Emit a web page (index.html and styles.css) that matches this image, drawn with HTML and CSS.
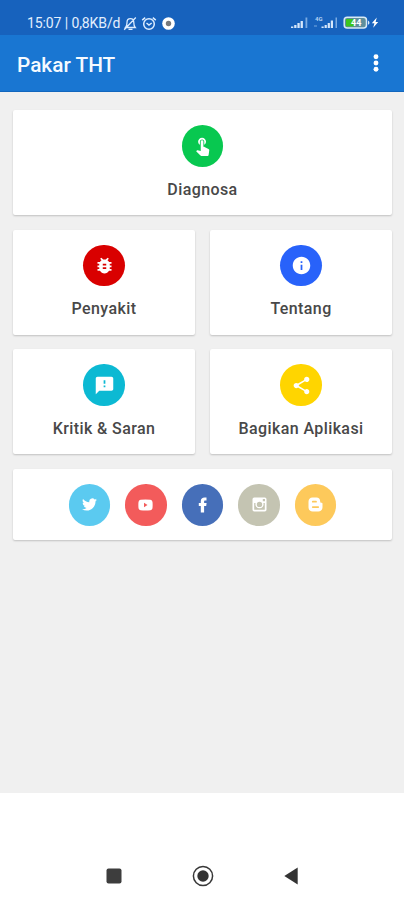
FILE: index.html
```html
<!DOCTYPE html>
<html lang="id">
<head>
<meta charset="utf-8">
<title>Pakar THT</title>
<link rel="stylesheet" href="styles.css">
</head>
<body>
<div class="status">
  <div class="status-left">
    <span class="clock">15:07 | 0,8KB/d</span>
    <svg class="mute" width="14" height="15" viewBox="0 0 14 15" fill="none" stroke="#dcecff" stroke-width="1.3"><path d="M2.5 11.5h9.7c-1.2-1.3-1.4-2.3-1.4-5C10.800 4 9.500 2.700 7.400 2.700S4 4 4 6.500c0 2.700-.3 3.700-1.500 5zM5.500 13.300h4M12.800 1.500L1.200 13.800"/></svg>
    <svg class="alarm" width="16" height="15" viewBox="0 0 16 15" fill="none" stroke="#dcecff" stroke-width="1.500"><circle cx="8" cy="8" r="5.300"/><path d="M1.200 4.200l3-2.500M14.800 4.200l-3-2.500M5.500 7l2.500 2 2.700-2"/></svg>
    <svg class="record" width="13" height="13" viewBox="0 0 13 13"><circle cx="6.500" cy="6.500" r="6.300" fill="#fff"/><circle cx="6.500" cy="6.500" r="2.700" fill="#77797c"/></svg>
  </div>
  <div class="status-right">
    <svg width="90" height="16" viewBox="0 0 90 16">
      <g fill="#d6e7fb"><path d="M1 11.500h2.300V13H1zM4.200 10h2.300v3H4.200zM7.400 8h2.300v5H7.400zM10.600 6h2.300v7h-2.300z"/><path d="M31.500 11.500h2.200V13h-2.200zM34.600 10h2.200v3h-2.200zM37.700 8h2.200v5h-2.200zM40.800 5.500H43V13h-2.200z"/></g>
      <path fill="#79aae2" d="M15.500 2.500h1.800V13h-1.800zM45.500 2.500h1.500V13h-1.500zM24 10.500h3v1h-3z"/>
      <text class="network" x="25" y="6">4G</text>
      <rect x="54.200" y="2.200" width="22.300" height="10.800" rx="3" fill="#5f8f9c" stroke="#d8eaf6" stroke-width="1.500"/>
      <path fill="#3cc51e" d="M56 4h8v7.400h-8z"/><path fill="#d8eaf6" d="M78 5.500c2 .8 2 3.500 0 4.300z"/>
      <text class="charge" x="61" y="11">44</text>
      <path fill="#fff" d="M86.800 2.500l-5 5.700h2.600l-1.200 4.500 5-5.800h-2.600z"/>
    </svg>
  </div>
</div>
<header class="appbar">
  <h1>Pakar THT</h1>
  <svg width="6" height="18" viewBox="0 0 6 18" fill="#fff"><circle cx="3" cy="2.700" r="2.450"/><circle cx="3" cy="9" r="2.450"/><circle cx="3" cy="15.300" r="2.450"/></svg>
</header>
<main class="content">
  <section class="card wide">
    <span class="circle green"><svg width="21" height="21" viewBox="0 0 24 24"><path d="M9 11.240V7.500C9 6.120 10.120 5 11.500 5S14 6.120 14 7.500v3.740c1.210-.81 2-2.180 2-3.740C16 5.010 13.990 3 11.500 3S7 5.010 7 7.500c0 1.560.79 2.930 2 3.740zm9.840 4.630l-4.540-2.260c-.17-.07-.35-.11-.54-.11H13v-6c0-.83-.67-1.500-1.500-1.500S10 6.670 10 7.500v10.740l-3.430-.72c-.08-.01-.15-.03-.24-.03-.31 0-.59.13-.79.33l-.79.8 4.940 4.940c.27.270.65.440 1.060.440h6.790c.75 0 1.330-.55 1.440-1.280l.75-5.270c.01-.07.020-.14.020-.2 0-.62-.38-1.160-.91-1.380z"/></svg></span>
    <span class="label">Diagnosa</span>
  </section>
  <section class="card">
    <span class="circle red"><svg width="21" height="21" viewBox="0 0 24 24"><path d="M20 8h-2.810c-.45-.78-1.070-1.450-1.820-1.960L17 4.410 15.590 3l-2.170 2.170C12.960 5.060 12.490 5 12 5s-.96.060-1.410.17L8.410 3 7 4.410l1.620 1.630C7.880 6.550 7.260 7.220 6.810 8H4v2h2.090c-.05.33-.09.66-.09 1v1H4v2h2v1c0 .34.040.67.090 1H4v2h2.810c1.040 1.790 2.970 3 5.190 3s4.150-1.210 5.190-3H20v-2h-2.090c.05-.33.090-.66.090-1v-1h2v-2h-2v-1c0-.34-.04-.67-.09-1H20V8zm-6 8h-4v-2h4v2zm0-4h-4v-2h4v2z"/></svg></span>
    <span class="label">Penyakit</span>
  </section>
  <section class="card">
    <span class="circle blue"><svg width="21" height="21" viewBox="0 0 24 24"><path d="M12 2C6.480 2 2 6.480 2 12s4.480 10 10 10 10-4.480 10-10S17.520 2 12 2zm1 15h-2v-6h2v6zm0-8h-2V7h2v2z"/></svg></span>
    <span class="label">Tentang</span>
  </section>
  <section class="card">
    <span class="circle cyan"><svg width="21" height="21" viewBox="0 0 24 24"><path d="M20 2H4c-1.100 0-1.990.9-1.990 2L2 22l4-4h14c1.100 0 2-.9 2-2V4c0-1.100-.9-2-2-2zm-7 12h-2v-2h2v2zm0-4h-2V6h2v4z"/></svg></span>
    <span class="label">Kritik &amp; Saran</span>
  </section>
  <section class="card">
    <span class="circle yellow"><svg width="21" height="21" viewBox="0 0 24 24"><path d="M18 16.080c-.76 0-1.440.3-1.960.77L8.910 12.700c.05-.23.090-.46.090-.7s-.04-.47-.09-.7l7.050-4.110c.54.5 1.250.81 2.040.81 1.660 0 3-1.340 3-3s-1.340-3-3-3-3 1.340-3 3c0 .24.040.47.090.7L8.040 9.810C7.500 9.310 6.790 9 6 9c-1.660 0-3 1.340-3 3s1.340 3 3 3c.79 0 1.500-.31 2.040-.81l7.120 4.160c-.05.21-.08.430-.08.650 0 1.610 1.310 2.920 2.920 2.920s2.920-1.310 2.920-2.920-1.310-2.920-2.920-2.920z"/></svg></span>
    <span class="label">Bagikan Aplikasi</span>
  </section>
  <section class="card wide social">
    <span class="circle twitter"><svg width="15" height="15" viewBox="0 0 24 24"><path d="M23.950 4.570a10 10 0 0 1-2.820.77 4.960 4.960 0 0 0 2.160-2.720c-.95.550-2 .96-3.130 1.180a4.920 4.920 0 0 0-8.380 4.480C7.690 8.100 4.070 6.130 1.640 3.160a4.820 4.820 0 0 0-.67 2.480c0 1.710.87 3.210 2.190 4.100a4.900 4.900 0 0 1-2.230-.62v.06a4.920 4.920 0 0 0 3.950 4.830 5 5 0 0 1-2.210.08 4.940 4.940 0 0 0 4.600 3.420A9.870 9.870 0 0 1 0 19.540a14 14 0 0 0 7.550 2.210c9.050 0 14-7.500 14-13.980l-.02-.63a9.900 9.900 0 0 0 2.420-2.570z"/></svg></span>
    <span class="circle youtube"><svg width="15" height="12" viewBox="0 0 15 12"><path fill-rule="evenodd" d="M2.500.8Q7.500.2 12.500.8 14.300 1 14.500 3q.3 3 0 6-.2 2-2 2.200-5 .6-10 0Q.7 11 .5 9q-.3-3 0-6Q.7 1 2.500.8zM6 3.700v4.600L9.500 6z"/></svg></span>
    <span class="circle facebook"><svg width="10" height="16" viewBox="0 0 10 16"><path d="M2.800 15.500V9H.8V6.100h2V4.300C2.800 1.800 4.300.6 6.600.6h1.900v2.800H7.200C6.400 3.400 6.100 3.800 6.100 4.500v1.600h2.500L8.200 9H6.100v6.500z"/></svg></span>
    <span class="circle instagram"><svg width="15" height="15" viewBox="0 0 15 15"><path fill-rule="evenodd" d="M2.200.5h10.600q1.700 0 1.700 1.700v10.600q0 1.700-1.700 1.700H2.200Q.5 14.500.5 12.800V2.200Q.5.5 2.200.5zM10.800 2v2.200H13V2zM2.200 6v6.200q0 .6.600.6h9.400q.6 0 .6-.6V6h-1.400a4.100 4.100 0 1 1-7.800 0zM7.500 4.700a2.700 2.700 0 1 0 0 5.400 2.700 2.700 0 0 0 0-5.400z"/></svg></span>
    <span class="circle blogger"><svg width="15" height="15" viewBox="0 0 15 15"><path fill-rule="evenodd" d="M4.500.5h4c2.200 0 3.700 1.600 3.700 3.700 0 1.300.4 1.600 1.200 1.600.7 0 1.100.3 1.100 1.100v3.300c0 2.500-1.800 4.300-4.200 4.300H4.700C2.200 14.500.5 12.700.5 10.300V4.700C.5 2.300 2 .5 4.500.5zM4.800 3.800a.9.900 0 0 0 0 1.800H8a.9.900 0 0 0 0-1.800zM4.800 9.200a.9.900 0 0 0 0 1.800h5.400a.9.900 0 0 0 0-1.800z"/></svg></span>
  </section>
</main>
<nav class="navbar">
  <svg width="16" height="16" viewBox="0 0 16 16"><rect x=".5" y=".5" width="15" height="15" rx="2" fill="#3d3d3d"/></svg>
  <svg width="22" height="22" viewBox="0 0 22 22"><circle cx="11" cy="11" r="9.600" fill="none" stroke="#383838" stroke-width="1.500"/><circle cx="11" cy="11" r="5.700" fill="#333"/></svg>
  <svg width="14" height="18" viewBox="0 0 14 18"><path d="M13.700.5v17L.3 9z" fill="#333"/></svg>
</nav>
</body>
</html>
```
FILE: styles.css
```css
* { box-sizing: border-box; }
body {
  margin: 0;
  height: 900px;
  display: flex;
  flex-direction: column;
  font-family: Roboto, "Liberation Sans", sans-serif;
  background: #fff;
}
svg { display: block; flex: none; }
.status {
  height: 35px;
  display: flex;
  justify-content: space-between;
  padding: 15px 24px 0 27px;
  background: #1762bd;
}
.status-left { display: flex; height: 16px; align-items: center; }
.clock {
  width: 95px;
  font-size: 14px;
  line-height: 16px;
  letter-spacing: -0.1px;
  white-space: nowrap;
  color: #e3effd;
}
.mute { margin-left: 1px; }
.alarm { margin-left: 4px; }
.record { margin-left: 5px; }
.network { font-size: 6px; font-weight: 700; fill: #b5d2f3; }
.charge { font-size: 9px; font-weight: 700; fill: #fff; }
.appbar {
  height: 57px;
  display: flex;
  align-items: center;
  justify-content: space-between;
  padding: 0 25px 0 17px;
  background: #1976d2;
  border-bottom: 1px solid #1266bd;
}
.appbar h1 {
  margin: 3px 0 0;
  font-size: 20.800px;
  line-height: 24px;
  font-weight: 500;
  color: #f5faff;
}
.content {
  height: 701px;
  display: grid;
  grid-template-columns: 182px 182px;
  grid-template-rows: 105px 105px 105px 71px;
  gap: 14.700px 15px;
  padding: 18px 12px 0 13px;
  background: #f0f0f0;
}
.card {
  display: flex;
  flex-direction: column;
  align-items: center;
  padding-top: 15px;
  background: #fff;
  border-radius: 2px;
  box-shadow: 0 1px 2px rgba(0, 0, 0, 0.2);
}
.wide { grid-column: 1 / 3; }
.circle {
  flex: none;
  width: 41.500px;
  height: 41.500px;
  display: flex;
  align-items: center;
  justify-content: center;
  border-radius: 50%;
}
.circle svg { fill: #fff; }
.green { background: #08c850; }
.red { background: #d90000; }
.blue { background: #2862fa; }
.cyan { background: #0cb9d3; }
.yellow { background: #ffd500; }
.label {
  margin-top: 13px;
  font-size: 16px;
  line-height: 20px;
  font-weight: 500;
  letter-spacing: 0.400px;
  white-space: nowrap;
  color: #484848;
}
.social {
  flex-direction: row;
  align-items: flex-start;
  justify-content: center;
  gap: 15.100px;
}
.twitter { background: #5bcaf0; }
.youtube { background: #f35b5b; }
.facebook { background: #466fb9; }
.instagram { background: #c4c4b2; }
.blogger { background: #fdc95b; }
.navbar {
  height: 107px;
  display: flex;
  align-items: center;
  justify-content: space-between;
  padding: 59px 106px 0 105.500px;
}
```
